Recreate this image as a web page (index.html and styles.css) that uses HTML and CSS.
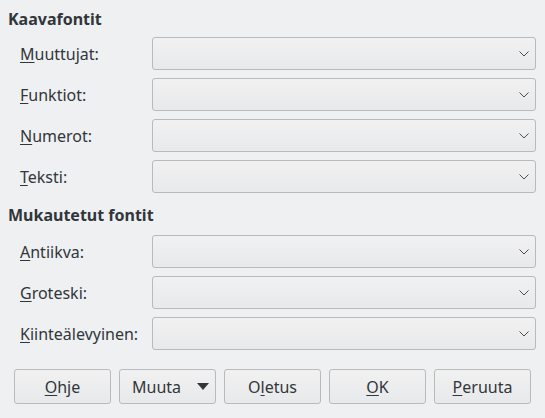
FILE: index.html
```html
<!DOCTYPE html>
<html>
<head>
<meta charset="utf-8">
<link rel="stylesheet" href="styles.css">
</head>
<body>
<div class="dialog">
  <div class="heading">Kaavafontit</div>
  <div class="group">
    <div class="row"><span class="label"><u>M</u>uuttujat:</span><div class="combo"><svg class="chev" width="10" height="6" viewBox="0 0 10 6"><path d="M0.5 0.5 L5 5 L9.5 0.5" fill="none" stroke="#4d4d4d" stroke-width="1"/></svg></div></div>
    <div class="row"><span class="label"><u>F</u>unktiot:</span><div class="combo"><svg class="chev" width="10" height="6" viewBox="0 0 10 6"><path d="M0.5 0.5 L5 5 L9.5 0.5" fill="none" stroke="#4d4d4d" stroke-width="1"/></svg></div></div>
    <div class="row"><span class="label"><u>N</u>umerot:</span><div class="combo"><svg class="chev" width="10" height="6" viewBox="0 0 10 6"><path d="M0.5 0.5 L5 5 L9.5 0.5" fill="none" stroke="#4d4d4d" stroke-width="1"/></svg></div></div>
    <div class="row"><span class="label"><u>T</u>eksti:</span><div class="combo"><svg class="chev" width="10" height="6" viewBox="0 0 10 6"><path d="M0.5 0.5 L5 5 L9.5 0.5" fill="none" stroke="#4d4d4d" stroke-width="1"/></svg></div></div>
  </div>
  <div class="heading h2">Mukautetut fontit</div>
  <div class="group">
    <div class="row"><span class="label"><u>A</u>ntiikva:</span><div class="combo"><svg class="chev" width="10" height="6" viewBox="0 0 10 6"><path d="M0.5 0.5 L5 5 L9.5 0.5" fill="none" stroke="#4d4d4d" stroke-width="1"/></svg></div></div>
    <div class="row"><span class="label"><u>G</u>roteski:</span><div class="combo"><svg class="chev" width="10" height="6" viewBox="0 0 10 6"><path d="M0.5 0.5 L5 5 L9.5 0.5" fill="none" stroke="#4d4d4d" stroke-width="1"/></svg></div></div>
    <div class="row"><span class="label"><u>K</u>iinteälevyinen:</span><div class="combo"><svg class="chev" width="10" height="6" viewBox="0 0 10 6"><path d="M0.5 0.5 L5 5 L9.5 0.5" fill="none" stroke="#4d4d4d" stroke-width="1"/></svg></div></div>
  </div>
  <div class="buttons">
    <div class="btn"><span><u>O</u>hje</span></div>
    <div class="btn menu"><span>Muuta</span><svg width="12" height="7" viewBox="0 0 12 7"><path d="M0 0 L12 0 L6 7 Z" fill="#31363b"/></svg></div>
    <div class="btn"><span>O<u>l</u>etus</span></div>
    <div class="btn"><span><u>O</u>K</span></div>
    <div class="btn"><span><u>P</u>eruuta</span></div>
  </div>
</div>
</body>
</html>
```
FILE: styles.css
```css
html, body {
  margin: 0;
  padding: 0;
  background: #eff0f1;
}
body {
  font-family: "Noto Sans", "Open Sans", sans-serif;
  font-size: 16px;
  color: #31363b;
  width: 545px;
  height: 418px;
  overflow: hidden;
}
.dialog {
  padding: 8px 9px 0 8px;
}
.heading {
  font-weight: bold;
  height: 22px;
  line-height: 22px;
  margin-bottom: 7px;
}
.h2 {
  margin-top: 11px;
  margin-bottom: 9px;
}
.group {
  display: flex;
  flex-direction: column;
  gap: 8px;
  padding-left: 12px;
}
.row {
  display: flex;
  align-items: center;
  height: 33px;
}
.label {
  width: 132px;
  flex: none;
}
u {
  text-decoration-thickness: 1px;
  text-underline-offset: 2px;
}
.combo {
  flex: 1;
  height: 33px;
  box-sizing: border-box;
  border: 1px solid #b9babb;
  border-radius: 3px;
  background: linear-gradient(#f1f1f2, #e8e9ea);
  display: flex;
  align-items: center;
  justify-content: flex-end;
  padding-right: 6px;
}
.buttons {
  display: flex;
  gap: 8px;
  margin-top: 19px;
  padding-left: 6px;
}
.btn {
  width: 97px;
  height: 35px;
  box-sizing: border-box;
  border: 1px solid #b9babb;
  border-radius: 3px;
  background: linear-gradient(#f1f1f2, #e8e9ea);
  display: flex;
  align-items: center;
  justify-content: center;
}
.menu {
  justify-content: space-between;
  padding: 0 6px 0 12px;
}
```
